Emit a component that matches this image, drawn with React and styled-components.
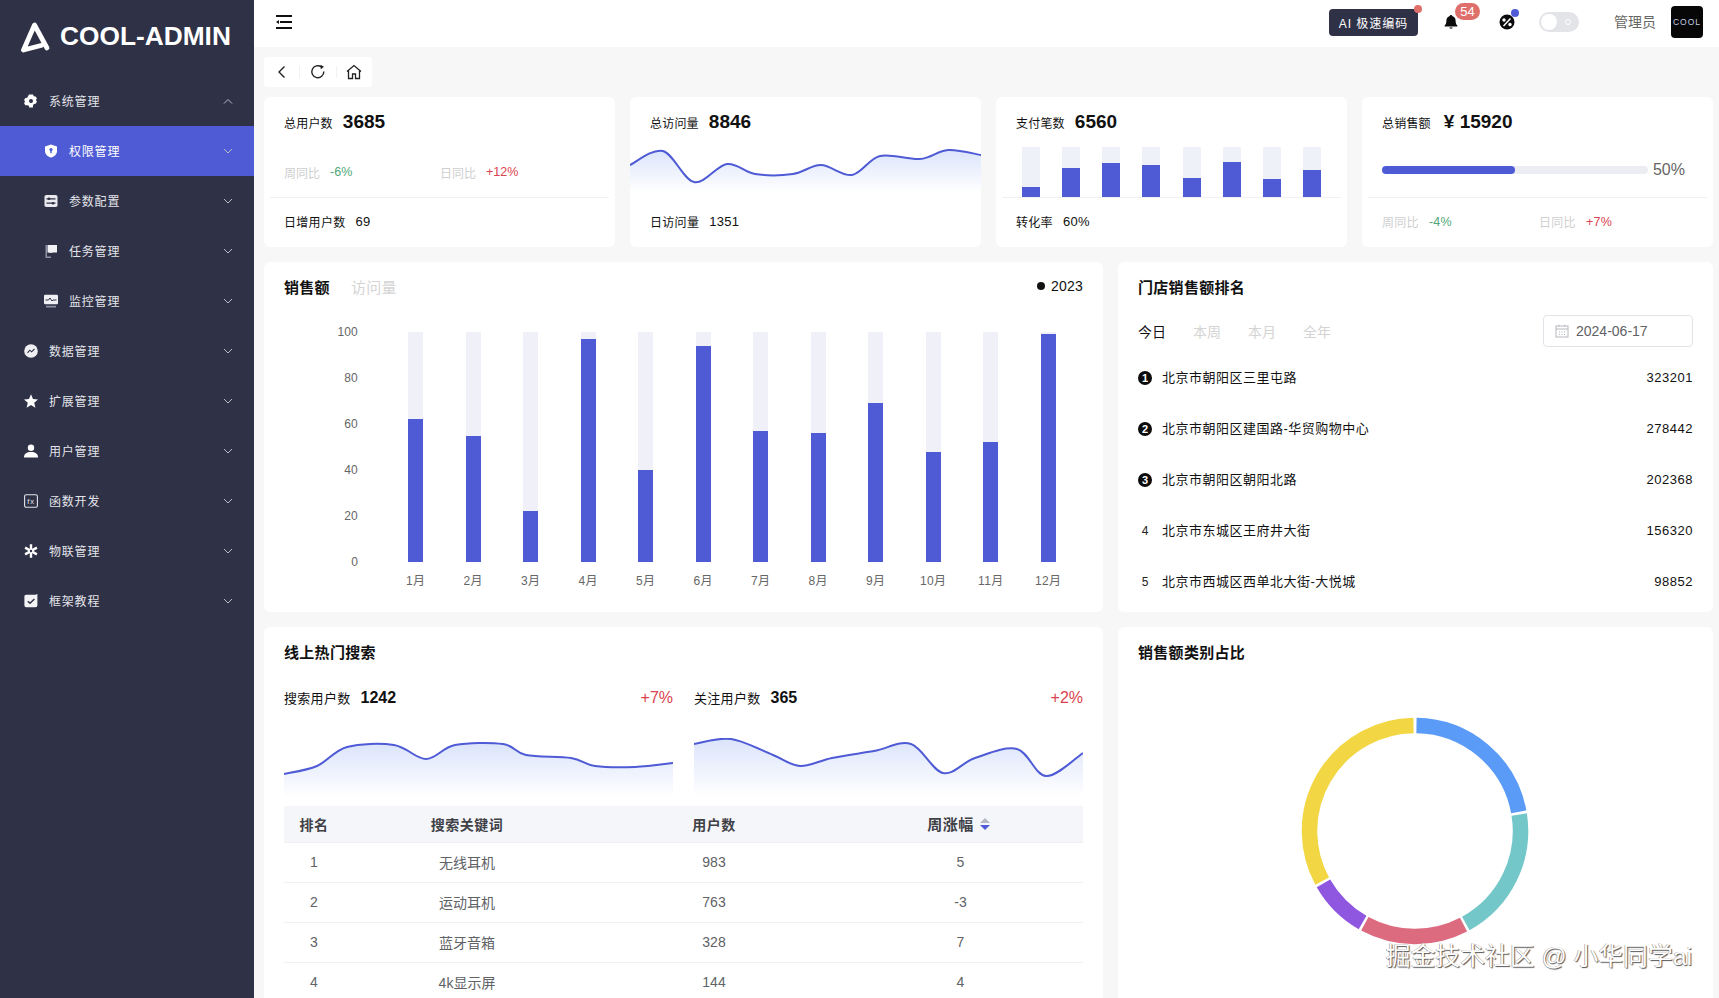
import React from 'react'
import styled, { createGlobalStyle } from 'styled-components'

const FONT = `"Liberation Sans", "Noto Sans CJK SC", sans-serif`
const NAVY = '#2f3146'
const BLUE = '#4f5bd5'

const GlobalStyle = createGlobalStyle`
  html, body { margin: 0; padding: 0; height: 100%; overflow: hidden; }
  body { font-family: ${FONT}; color: #111; background: #f7f7f7; }
  * { box-sizing: border-box; }
`

const Page = styled.div`
  display: flex;
  width: 100%;
  height: 100vh;
  overflow: hidden;
  position: relative;
`

/* sidebar */
const Side = styled.aside`
  width: 254px;
  flex: none;
  background: ${NAVY};
  color: #fff;
`
const Logo = styled.div`
  height: 76px;
  display: flex;
  align-items: center;
  gap: 9px;
  padding: 0 0 3px 20px;
  font-size: 26.3px;
  font-weight: 700;
  white-space: nowrap;
`
const MenuRow = styled.div`
  height: 50px;
  display: flex;
  align-items: center;
  padding-left: ${p => (p.$child ? 44 : 24)}px;
  padding-right: 21px;
  background: ${p => (p.$active ? BLUE : 'transparent')};
  font-size: 12px;
  letter-spacing: 0.8px;
  color: ${p => (p.$active ? '#fff' : '#e4e5ea')};
`
const MenuIcon = styled.span`
  width: 14px;
  height: 14px;
  margin-right: 11px;
  display: flex;
  svg { width: 14px; height: 14px; display: block; }
`
const MenuText = styled.span`
  flex: 1;
  padding-bottom: 2px;
`

/* main area */
const Main = styled.main`
  flex: 1;
  min-width: 0;
  display: flex;
  flex-direction: column;
`
const Top = styled.header`
  height: 47px;
  flex: none;
  background: #fff;
  display: flex;
  align-items: center;
  padding: 0 16px 3px 22px;
`
const Burger = styled.svg`
  width: 16px;
  height: 14px;
  margin-right: auto;
`
const AiButton = styled.div`
  position: relative;
  width: 89px;
  height: 27px;
  background: ${NAVY};
  color: #fff;
  border-radius: 4px;
  font-size: 12px;
  letter-spacing: 1px;
  display: flex;
  align-items: center;
  justify-content: center;
  margin-right: 25px;
`
const Dot = styled.i`
  position: absolute;
  width: 8px;
  height: 8px;
  border-radius: 50%;
  background: ${p => p.$color};
  right: ${p => p.$right}px;
  top: ${p => p.$top}px;
`
const IconBox = styled.div`
  position: relative;
  width: 16px;
  height: 16px;
  display: flex;
  margin-right: ${p => p.$gap}px;
  svg { width: 16px; height: 16px; }
`
const Badge = styled.span`
  position: absolute;
  left: 12px;
  top: -11px;
  width: 25px;
  height: 17px;
  border-radius: 9px;
  background: #df6f6b;
  color: #fff;
  font-size: 13px;
  line-height: 17px;
  text-align: center;
`
const Toggle = styled.div`
  width: 40px;
  height: 20px;
  border-radius: 10px;
  background: #e3e4e8;
  padding: 2px;
  margin-right: 35px;
  display: flex;
  align-items: center;
  justify-content: space-between;
`
const Knob = styled.span`
  width: 16px;
  height: 16px;
  border-radius: 50%;
  background: #fff;
`
const Sun = styled.span`
  width: 6px;
  height: 6px;
  border-radius: 50%;
  border: 1px solid #fff;
  margin-right: 6px;
`
const UserName = styled.span`
  font-size: 14px;
  color: #666;
  margin-right: 15px;
  padding-bottom: 2px;
`
const Avatar = styled.div`
  width: 32px;
  height: 32px;
  border-radius: 4px;
  background: #070707;
  color: #c3cfe4;
  font-size: 8.5px;
  letter-spacing: 1px;
  display: flex;
  align-items: center;
  justify-content: center;
`

const Content = styled.div`
  flex: 1;
  min-height: 0;
  overflow: hidden;
  padding: 10px 6px 0 10px;
`
const Process = styled.div`
  width: 108px;
  height: 30px;
  background: #fff;
  border-radius: 3px;
  display: flex;
  align-items: center;
  margin-bottom: 10px;
`
const ProcessBtn = styled.span`
  flex: 1;
  height: 12px;
  display: flex;
  align-items: center;
  justify-content: center;
  border-left: ${p => (p.$first ? 'none' : '1px solid #f1f1f3')};
  svg { width: 18px; height: 18px; flex: none; }
`
const Grid = styled.div`
  display: grid;
  grid-template-columns: repeat(24, 1fr);
  column-gap: 15px;
  row-gap: 15px;
`
const Card = styled.section`
  grid-column: span ${p => p.$span};
  height: ${p => p.$height}px;
  background: #fff;
  border-radius: 6px;
  position: relative;
  overflow: hidden;
  display: flex;
  flex-direction: column;
`
const StatHead = styled.div`
  display: flex;
  align-items: center;
  gap: 10px;
  height: 50px;
  padding: 0 20px;
  font-size: 12px;
  letter-spacing: 0.2px;
  flex: none;
`
const BigNum = styled.b`
  font-size: 19px;
  font-weight: 700;
  letter-spacing: 0;
  margin-left: ${p => p.$shift || 0}px;
`
const StatBody = styled.div`
  flex: 1;
  min-height: 0;
`
const StatFoot = styled.div`
  height: 50px;
  flex: none;
  display: flex;
  align-items: center;
  gap: 10px;
  margin: 0 6px;
  padding: ${p => (p.$flush ? '0' : '0 14px 2px')};
  font-size: 12px;
  border-top: 1px solid ${p => (p.$line ? '#f0f0f2' : 'transparent')};
  letter-spacing: 0.3px;
`
const FootNum = styled.span`
  font-size: 13px;
`
const Compare = styled.div`
  display: flex;
  align-items: center;
  height: 100%;
  padding: 0 ${p => p.$pad}px ${p => p.$bottom}px;
  font-size: 12px;
`
const CompareItem = styled.span`
  width: ${p => p.$width}px;
  flex: none;
  display: flex;
  align-items: center;
  gap: 10px;
  color: #cfcfcf;
  b {
    font-size: 12.5px;
    font-weight: 400;
    color: ${p => (p.$up ? '#d9434e' : '#4fa777')};
  }
`
const MiniBars = styled.div`
  height: 100%;
  padding: 0 26px;
  display: flex;
  justify-content: space-between;
`
const MiniTrack = styled.div`
  width: 18px;
  height: 100%;
  background: #eff1f8;
  display: flex;
  align-items: flex-end;
`
const Fill = styled.div`
  width: 100%;
  background: ${BLUE};
`
const ProgressWrap = styled.div`
  height: 100%;
  padding: 0 28px 4px 20px;
  display: flex;
  align-items: center;
  gap: 5px;
  font-size: 16px;
  color: #666;
`
const ProgressTrack = styled.div`
  flex: 1;
  height: 8px;
  border-radius: 4px;
  background: #ecedf2;
`
const ProgressFill = styled.div`
  width: 50%;
  height: 100%;
  border-radius: 4px;
  background: ${BLUE};
`

/* sales chart */
const CardHead = styled.div`
  height: 50px;
  padding: 0 20px 2px;
  flex: none;
  display: flex;
  align-items: center;
  gap: 21px;
  font-size: 15px;
  letter-spacing: 0.3px;
  font-weight: 700;
`
const Muted = styled.span`
  color: #d4d4d4;
  font-weight: 400;
`
const Year = styled.span`
  margin-left: auto;
  display: flex;
  align-items: center;
  gap: 6px;
  font-size: 14px;
  letter-spacing: 0.2px;
  font-weight: 400;
  &::before {
    content: '';
    width: 8px;
    height: 8px;
    border-radius: 50%;
    background: #111;
  }
`
const ChartWrap = styled.div`
  display: flex;
  padding-top: 13px;
`
const YAxis = styled.div`
  width: 94px;
  height: 244px;
  display: flex;
  flex-direction: column;
  justify-content: space-between;
  align-items: flex-end;
  font-size: 12px;
  letter-spacing: 0.2px;
  line-height: 14px;
  color: #666;
`
const Plot = styled.div`
  display: flex;
  margin: 7px 0 0 29px;
`
const Col = styled.div`
  width: 57.5px;
  display: flex;
  flex-direction: column;
  align-items: center;
`
const Track = styled.div`
  width: 15px;
  height: 230px;
  background: #f0f1f8;
  display: flex;
  align-items: flex-end;
`
const MonthLabel = styled.span`
  margin-top: 12px;
  font-size: 12px;
  line-height: 14px;
  color: #666;
  letter-spacing: 0.3px;
`

/* ranking */
const RankTools = styled.div`
  display: flex;
  align-items: center;
  height: 32px;
  margin-top: 3px;
  padding: 0 20px;
  font-size: 14px;
`
const RankTab = styled.span`
  width: 55px;
  padding-bottom: 1px;
  color: ${p => (p.$active ? '#111' : '#d4d4d4')};
`
const DateBox = styled.div`
  margin-left: auto;
  width: 150px;
  height: 32px;
  border: 1px solid #e1e3e8;
  border-radius: 4px;
  display: flex;
  align-items: center;
  gap: 7px;
  padding-left: 11px;
  color: #606266;
  svg { width: 14px; height: 14px; }
`
const RankList = styled.div`
  padding: 5px 20px 0;
`
const RankRow = styled.div`
  height: 51px;
  display: flex;
  align-items: center;
  font-size: 13px;
  letter-spacing: 0.5px;
`
const RankNo = styled.span`
  width: 14px;
  height: 14px;
  flex: none;
  margin-right: 10px;
  border-radius: 50%;
  background: ${p => (p.$top ? '#0c0c0c' : 'transparent')};
  color: ${p => (p.$top ? '#fff' : '#222')};
  font-size: ${p => (p.$top ? 11 : 12)}px;
  font-weight: ${p => (p.$top ? 700 : 400)};
  line-height: 14px;
  text-align: center;
  letter-spacing: 0;
`
const RankName = styled.span`
  flex: 1;
  padding-bottom: 2px;
`

/* hot search */
const SearchCols = styled.div`
  display: grid;
  grid-template-columns: 1fr 1fr;
  column-gap: 21px;
  padding: 0 20px;
`
const SearchHead = styled.div`
  height: 32px;
  margin-top: 5px;
  display: flex;
  align-items: center;
  gap: 10px;
  font-size: 13px;
  letter-spacing: 0.3px;
  b { font-size: 16px; letter-spacing: 0; }
`
const SearchLabel = styled.span`
  padding-bottom: 2px;
`
const Rise = styled.span`
  margin-left: auto;
  color: #d9434e;
  font-size: 16px;
  letter-spacing: 0;
`
const Spark = styled.svg`
  display: block;
  width: 100%;
`
const SparkSlot = styled.div`
  margin-top: ${p => p.$top}px;
`
const Table = styled.div`
  margin: 3px 20px 0;
`
const TableRow = styled.div`
  display: grid;
  grid-template-columns: 60px 246px 248px 1fr;
  height: ${p => (p.$head ? 37 : 40)}px;
  padding-bottom: 1px;
  align-items: center;
  text-align: center;
  font-size: 14px;
  letter-spacing: ${p => (p.$head ? 0.5 : 0)}px;
  background: ${p => (p.$head ? '#f5f6fa' : '#fff')};
  color: ${p => (p.$head ? '#3f4147' : '#606266')};
  font-weight: ${p => (p.$head ? 700 : 400)};
  border-bottom: 1px solid #eff0f3;
`
const HeadSort = styled.span`
  display: flex;
  align-items: center;
  justify-content: center;
  gap: 6px;
  padding-right: 4px;
  font-size: 15px;
`
const Sorter = styled.span`
  width: 10px;
  display: flex;
  flex-direction: column;
  align-items: center;
  gap: 2px;
  &::before, &::after {
    content: '';
    width: 0;
    height: 0;
    border-left: 5px solid transparent;
    border-right: 5px solid transparent;
  }
  &::before { border-bottom: 5px solid #b5b8c2; }
  &::after { border-top: 5px solid ${BLUE}; }
`
const DonutSvg = styled.svg`
  display: block;
  width: 240px;
  height: 240px;
  margin: 34px 0 0 177px;
`
const Watermark = styled.div`
  position: absolute;
  right: 27px;
  bottom: 26px;
  font-size: 24.8px;
  line-height: 30px;
  white-space: nowrap;
  color: #fff;
  text-shadow: 1px 1px 1px #555, -0.5px -0.5px 0 #888;
`

/* helpers */
const smooth = pts => {
  let d = `M${pts[0][0]} ${pts[0][1]}`
  for (let i = 0; i < pts.length - 1; i++) {
    const p0 = pts[i - 1] || pts[i]
    const p1 = pts[i]
    const p2 = pts[i + 1]
    const p3 = pts[i + 2] || p2
    const c1 = [p1[0] + (p2[0] - p0[0]) / 6, p1[1] + (p2[1] - p0[1]) / 6]
    const c2 = [p2[0] - (p3[0] - p1[0]) / 6, p2[1] - (p3[1] - p1[1]) / 6]
    d += ` C${c1[0].toFixed(1)} ${c1[1].toFixed(1)} ${c2[0].toFixed(1)} ${c2[1].toFixed(1)} ${p2[0]} ${p2[1]}`
  }
  return d
}

const SparkLine = ({ id, pts, width, height }) => {
  const line = smooth(pts)
  return (
    <Spark viewBox={`0 0 ${width} ${height}`} height={height}>
      <defs>
        <linearGradient id={id} x1="0" y1="0" x2="0" y2="1">
          <stop offset="0" stopColor="#dbe4fb" />
          <stop offset="0.9" stopColor="#ffffff" />
        </linearGradient>
      </defs>
      <path d={`${line} L${width} ${height} L0 ${height} Z`} fill={`url(#${id})`} />
      <path d={line} fill="none" stroke={BLUE} strokeWidth="2" />
    </Spark>
  )
}

const arc = (cx, cy, r, from, to) => {
  const pt = a => {
    const rad = ((a - 90) * Math.PI) / 180
    return `${(cx + r * Math.cos(rad)).toFixed(2)} ${(cy + r * Math.sin(rad)).toFixed(2)}`
  }
  return `M${pt(from)} A${r} ${r} 0 ${to - from > 180 ? 1 : 0} 1 ${pt(to)}`
}

const Chevron = ({ up }) => (
  <svg width="10" height="6" viewBox="0 0 10 6" fill="none" stroke="#b9bbc7" strokeWidth="1">
    <path d={up ? 'M1 5.5 5 1.5 9 5.5' : 'M1 1 5 5 9 1'} />
  </svg>
)

const Icons = {
  gear: (
    <svg viewBox="0 0 14 14">
      <path fill="#fff" d="M5 .6h4l.8 1.7 1.9.2 1.2 2-.9 1.6.9 1.7-1.2 2-1.9.1L9 11.7l-.1 1.7H5.1L5 11.7l-1.8-.4-1.9-.1-1.2-2 .9-1.7-.9-1.6 1.2-2 1.9-.2z" />
      <circle cx="7" cy="7" r="2" fill={NAVY} />
    </svg>
  ),
  shield: (
    <svg viewBox="0 0 14 14">
      <path fill="#fff" d="M7 .5 13 2.4v4.8c0 3-2.6 5.3-6 6.4C3.600 12.500 1 10.200 1 7.200V2.400z" />
      <circle cx="7" cy="5.6" r="1.6" fill={BLUE} />
      <path fill={BLUE} d="M6.3 6.500h1.400v2.800H6.300z" />
    </svg>
  ),
  sliders: (
    <svg viewBox="0 0 14 14">
      <rect x=".5" y="1" width="13" height="12" rx="1.8" fill="#e9e9ee" />
      <path stroke={NAVY} strokeWidth="1.2" d="M2.500 4.800h9M2.500 9.200h9" />
      <circle cx="5" cy="4.8" r="1.3" fill={NAVY} />
      <circle cx="9" cy="9.2" r="1.3" fill={NAVY} />
    </svg>
  ),
  flag: (
    <svg viewBox="0 0 14 14">
      <path fill="#8f90a0" d="M1.500 1H3v11.500h4V14H1.500z" />
      <path fill="#f2f2f5" d="M3.500 1H13v7.500H9L7.500 9l-4-.5z" />
    </svg>
  ),
  monitor: (
    <svg viewBox="0 0 14 14">
      <rect y=".8" width="14" height="9.5" rx="1.2" fill="#f0f0f4" />
      <path fill="none" stroke={NAVY} strokeWidth="1" d="M1.500 6h3L6 4l2 3 1-1h3.500" />
      <rect x="2" y="11.8" width="10" height="1.7" fill="#8f90a0" />
    </svg>
  ),
  chart: (
    <svg viewBox="0 0 14 14">
      <circle cx="7" cy="7" r="6.8" fill="#f0f0f4" />
      <path fill="none" stroke={NAVY} strokeWidth="1.1" d="M3.500 8.800 5.800 6.200 7.600 7.800 10.500 5" />
    </svg>
  ),
  star: (
    <svg viewBox="0 0 14 14">
      <path fill="#fff" d="M7 .3 9 4.900l5 .5-3.800 3.300 1.200 5L7 11.100l-4.400 2.600 1.200-5L0 5.400l5-.5z" />
    </svg>
  ),
  user: (
    <svg viewBox="0 0 14 14">
      <circle cx="7" cy="3.8" r="3.2" fill="#fff" />
      <path fill="#fff" d="M0 13c0-3 2.600-5 7-5s7 2 7 5v.5H0z" />
    </svg>
  ),
  fx: (
    <svg viewBox="0 0 14 14">
      <rect x=".6" y=".8" width="12.8" height="12.4" rx="1.5" fill="none" stroke="#e4e5ea" strokeWidth="1.1" />
      <text x="7" y="9.7" textAnchor="middle" fontSize="7.5" fontFamily={FONT} fill="#e4e5ea">fx</text>
    </svg>
  ),
  snow: (
    <svg viewBox="0 0 14 14">
      <path stroke="#fff" strokeWidth="2.4" d="M7 .2v13.600M1.100 3.600l11.800 6.800M12.900 3.600 1.100 10.400" />
      <circle cx="7" cy="7" r="1.2" fill={NAVY} />
    </svg>
  ),
  check: (
    <svg viewBox="0 0 14 14">
      <path fill="#f4f4f7" d="M2.200.8h9.300L13.400 0v11.200c0 1.200-.8 2-2 2H2.400c-1.200 0-2-.8-2-2V2.600C.4 1.500 1.100.8 2.200.8z" />
      <path fill="none" stroke={NAVY} strokeWidth="1.5" d="M3.800 7.200 6 9.300 10.400 5" />
    </svg>
  ),
}

const menu = [
  { icon: 'gear', label: '系统管理', open: true },
  { icon: 'shield', label: '权限管理', child: true, active: true },
  { icon: 'sliders', label: '参数配置', child: true },
  { icon: 'flag', label: '任务管理', child: true },
  { icon: 'monitor', label: '监控管理', child: true },
  { icon: 'chart', label: '数据管理' },
  { icon: 'star', label: '扩展管理' },
  { icon: 'user', label: '用户管理' },
  { icon: 'fx', label: '函数开发' },
  { icon: 'snow', label: '物联管理' },
  { icon: 'check', label: '框架教程' },
]

const visitPts = [[0, 18], [33, 4], [64, 35], [97, 17], [125, 27], [163, 27], [191, 18], [222, 28], [250, 9], [290, 12], [318, 3], [351, 8]]
const searchPts = [[0, 36], [33, 28], [63, 9], [110, 7], [142, 21], [171, 7], [219, 6], [242, 17], [287, 20], [311, 28], [351, 29], [389, 25]]
const followPts = [[0, 6], [37, 1], [79, 17], [106, 28], [138, 20], [180, 13], [217, 6], [249, 35], [281, 20], [323, 11], [352, 38], [389, 15]]
const payBars = [10, 29, 34, 32, 19, 35, 18, 27]
const sales = [62, 55, 22, 97, 40, 94, 57, 56, 69, 48, 52, 99]
const shops = [
  ['北京市朝阳区三里屯路', 323201],
  ['北京市朝阳区建国路-华贸购物中心', 278442],
  ['北京市朝阳区朝阳北路', 202368],
  ['北京市东城区王府井大街', 156320],
  ['北京市西城区西单北大街-大悦城', 98852],
]
const keywords = [
  [1, '无线耳机', 983, 5],
  [2, '运动耳机', 763, -3],
  [3, '蓝牙音箱', 328, 7],
  [4, '4k显示屏', 144, 4],
]
const donut = [
  { from: 0.8, to: 79.5, color: '#5b9bf8' },
  { from: 81, to: 151.2, color: '#74c7c9' },
  { from: 152.6, to: 208.4, color: '#dd6b7f' },
  { from: 209.8, to: 240.2, color: '#8f56e0' },
  { from: 241.6, to: 359.2, color: '#f3d643' },
]

const CompareRow = ({ wk, day, width, pad, bottom }) => (
  <Compare $pad={pad} $bottom={bottom}>
    <CompareItem $width={width}>周同比<b>{wk}</b></CompareItem>
    <CompareItem $up>日同比<b>{day}</b></CompareItem>
  </Compare>
)

const App = () => (
  <Page>
    <GlobalStyle />
    <Side>
      <Logo>
        <svg width="31" height="32" viewBox="0 0 31 32">
          <path fill="none" stroke="#fff" strokeWidth="4.8" strokeLinejoin="round" strokeLinecap="round" d="M27 27 14.500 4 3.500 29 21 24.500" />
        </svg>
        COOL-ADMIN
      </Logo>
      {menu.map(m => (
        <MenuRow key={m.label} $child={m.child} $active={m.active}>
          <MenuIcon>{Icons[m.icon]}</MenuIcon>
          <MenuText>{m.label}</MenuText>
          <Chevron up={m.open} />
        </MenuRow>
      ))}
    </Side>
    <Main>
      <Top>
        <Burger viewBox="0 0 16 14">
          <path stroke="#111" strokeWidth="1.8" d="M0 1h16M0 13h16M4 7h12" />
          <path fill="#111" d="M0 7l3-2v4z" />
        </Burger>
        <AiButton>
          AI 极速编码
          <Dot $color="#df6f6b" $right={-4} $top={-4} />
        </AiButton>
        <IconBox $gap={40}>
          <svg viewBox="0 0 16 16">
            <path fill="#0c0c0c" d="M8 1c.7 0 1.200.4 1.200 1 2.200.6 3.400 2.400 3.400 4.800 0 2.400.6 3.700 1.800 4.700v1H1.600v-1c1.200-1 1.800-2.300 1.800-4.700C3.400 4.400 4.600 2.600 6.800 2 6.800 1.400 7.300 1 8 1z" />
            <path fill="#555" d="M6.300 13.300h3.400c0 1-.8 1.700-1.700 1.700s-1.700-.7-1.700-1.700z" />
          </svg>
          <Badge>54</Badge>
        </IconBox>
        <IconBox $gap={24}>
          <svg viewBox="0 0 16 16">
            <circle cx="8" cy="8" r="7.5" fill="#0c0c0c" />
            <path stroke="#fff" strokeWidth="1.5" d="M4.500 12 11.500 4.500" />
            <circle cx="5" cy="6" r="1.7" fill="#fff" />
            <circle cx="11" cy="10.5" r="1.7" fill="#fff" />
          </svg>
          <Dot $color={BLUE} $right={-4} $top={-5} />
        </IconBox>
        <Toggle>
          <Knob />
          <Sun />
        </Toggle>
        <UserName>管理员</UserName>
        <Avatar>COOL</Avatar>
      </Top>
      <Content>
        <Process>
          <ProcessBtn $first>
            <svg viewBox="0 0 18 18" fill="none" stroke="#222" strokeWidth="1.4">
              <path d="M11.500 3.500 6 9l5.500 5.500" />
            </svg>
          </ProcessBtn>
          <ProcessBtn>
            <svg viewBox="0 0 18 18" fill="none" stroke="#222" strokeWidth="1.4">
              <path d="M14.800 8.500A6 6 0 1 1 12.500 4" />
              <path fill="#222" stroke="none" d="M11.500 1.800 15 3.800 11.800 6.300z" />
            </svg>
          </ProcessBtn>
          <ProcessBtn>
            <svg viewBox="0 0 18 18" fill="none" stroke="#222" strokeWidth="1.3">
              <path d="M2 8.500 9 2.500l7 6M3.500 7.500v8h4v-4.500h3V15.500h4v-8" />
            </svg>
          </ProcessBtn>
        </Process>
        <Grid>
          <Card $span={6} $height={150}>
            <StatHead>总用户数<BigNum>3685</BigNum></StatHead>
            <StatBody><CompareRow wk="-6%" day="+12%" width={156} pad={20} bottom={0} /></StatBody>
            <StatFoot $line>日增用户数<FootNum>69</FootNum></StatFoot>
          </Card>
          <Card $span={6} $height={150}>
            <StatHead>总访问量<BigNum>8846</BigNum></StatHead>
            <StatBody>
              <SparkLine id="visit" pts={visitPts} width={351} height={50} />
            </StatBody>
            <StatFoot>日访问量<FootNum>1351</FootNum></StatFoot>
          </Card>
          <Card $span={6} $height={150}>
            <StatHead>支付笔数<BigNum>6560</BigNum></StatHead>
            <StatBody>
              <MiniBars>
                {payBars.map((h, i) => (
                  <MiniTrack key={i}><Fill style={{ height: h }} /></MiniTrack>
                ))}
              </MiniBars>
            </StatBody>
            <StatFoot $line>转化率<FootNum>60%</FootNum></StatFoot>
          </Card>
          <Card $span={6} $height={150}>
            <StatHead>总销售额<BigNum $shift={3}>¥ 15920</BigNum></StatHead>
            <StatBody>
              <ProgressWrap>
                <ProgressTrack><ProgressFill /></ProgressTrack>
                50%
              </ProgressWrap>
            </StatBody>
            <StatFoot $line $flush>
              <CompareRow wk="-4%" day="+7%" width={157} pad={14} bottom={2} />
            </StatFoot>
          </Card>

          <Card $span={14} $height={350}>
            <CardHead>销售额<Muted>访问量</Muted><Year>2023</Year></CardHead>
            <ChartWrap>
              <YAxis>
                {[100, 80, 60, 40, 20, 0].map(v => <span key={v}>{v}</span>)}
              </YAxis>
              <Plot>
                {sales.map((v, i) => (
                  <Col key={i}>
                    <Track><Fill style={{ height: `${v}%` }} /></Track>
                    <MonthLabel>{i + 1}月</MonthLabel>
                  </Col>
                ))}
              </Plot>
            </ChartWrap>
          </Card>
          <Card $span={10} $height={350}>
            <CardHead>门店销售额排名</CardHead>
            <RankTools>
              <RankTab $active>今日</RankTab>
              <RankTab>本周</RankTab>
              <RankTab>本月</RankTab>
              <RankTab>全年</RankTab>
              <DateBox>
                <svg viewBox="0 0 14 14" fill="none" stroke="#b5b8bf" strokeWidth="1">
                  <rect x="1" y="2" width="12" height="11" />
                  <path d="M1 5h12M4 .8v2M10 .8v2M4 8h1M6.500 8h1M9 8h1M4 10.500h1M6.500 10.500h1M9 10.500h1" />
                </svg>
                2024-06-17
              </DateBox>
            </RankTools>
            <RankList>
              {shops.map(([name, n], i) => (
                <RankRow key={name}>
                  <RankNo $top={i < 3}>{i + 1}</RankNo>
                  <RankName>{name}</RankName>
                  {n}
                </RankRow>
              ))}
            </RankList>
          </Card>

          <Card $span={14} $height={420}>
            <CardHead>线上热门搜索</CardHead>
            <SearchCols>
              <div>
                <SearchHead><SearchLabel>搜索用户数</SearchLabel><b>1242</b><Rise>+7%</Rise></SearchHead>
                <SparkSlot $top={24}>
                  <SparkLine id="search" pts={searchPts} width={389} height={65} />
                </SparkSlot>
              </div>
              <div>
                <SearchHead><SearchLabel>关注用户数</SearchLabel><b>365</b><Rise>+2%</Rise></SearchHead>
                <SparkSlot $top={24}>
                  <SparkLine id="follow" pts={followPts} width={389} height={65} />
                </SparkSlot>
              </div>
            </SearchCols>
            <Table>
              <TableRow $head>
                <span>排名</span>
                <span>搜索关键词</span>
                <span>用户数</span>
                <HeadSort>周涨幅<Sorter /></HeadSort>
              </TableRow>
              {keywords.map(r => (
                <TableRow key={r[0]}>
                  {r.map((c, i) => <span key={i}>{c}</span>)}
                </TableRow>
              ))}
            </Table>
          </Card>
          <Card $span={10} $height={420}>
            <CardHead>销售额类别占比</CardHead>
            <DonutSvg viewBox="0 0 240 240">
              {donut.map(s => (
                <path key={s.color} d={arc(120, 120, 105.5, s.from, s.to)} fill="none" stroke={s.color} strokeWidth="15.5" />
              ))}
            </DonutSvg>
          </Card>
        </Grid>
      </Content>
    </Main>
    <Watermark>掘金技术社区 @ 小华同学ai</Watermark>
  </Page>
)

export default App
